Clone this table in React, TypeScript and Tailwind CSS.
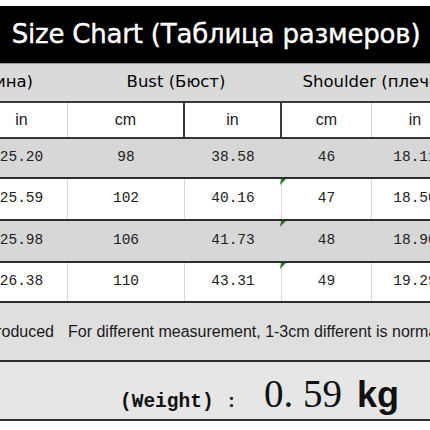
import React from "react";

const widths = ["w-[92px]", "w-[117px]", "w-[97px]", "w-[90px]", "w-[86px]"];

type Row = { values: string[]; shaded: boolean; height: string; mark?: boolean };

const rows: Row[] = [
  { values: ["25.20", "98", "38.58", "46", "18.11"], shaded: true, height: "h-[40px]" },
  { values: ["25.59", "102", "40.16", "47", "18.50"], shaded: false, height: "h-[42px]", mark: true },
  { values: ["25.98", "106", "41.73", "48", "18.90"], shaded: true, height: "h-[42px]", mark: true },
  { values: ["26.38", "110", "43.31", "49", "19.29"], shaded: false, height: "h-[40px]", mark: true },
];

const comic = { fontFamily: '"DejaVu Sans", sans-serif' };

// little green corner flag like the one left by the spreadsheet
const Mark = () => (
  <svg className="absolute left-[-2px] top-0" width="7" height="7" viewBox="0 0 7 7">
    <polygon points="1,0 6,0 0,6" fill="#2f7a2a" />
  </svg>
);

export default function App() {
  return (
    <div className="w-[430px] h-[430px] bg-white overflow-hidden">
      <div className="h-[6px]" />
      <div
        className="h-[57px] bg-black flex items-center justify-center text-white text-[26px] tracking-[-0.2px] pl-[2px] pb-[1px]"
        style={{ ...comic, WebkitTextStroke: "0.4px white" }}
      >
        Size Chart (Таблица размеров)
      </div>

      {/* group headers */}
      <div
        className="h-[40px] bg-[#dadada] border-t border-[#9a9a9a] border-b-2 border-b-[#3a3a3a] flex items-center text-[16.5px] text-[#000] whitespace-nowrap"
        style={comic}
      >
        <div className="w-[68px] overflow-hidden flex justify-end pr-[35px] shrink-0">
          <span>Length (Длина)</span>
        </div>
        <div className="w-[214px] text-center shrink-0 pl-[2px]">Bust (Бюст)</div>
        <div className="w-[176px] text-center shrink-0 pl-[8px]">Shoulder (плечо)</div>
      </div>

      {/* units */}
      <div
        className="h-[36px] bg-white border-b-2 border-[#333] flex ml-[-24px] text-[16px] text-[#222]"
        style={{ fontFamily: '"Liberation Sans", sans-serif' }}
      >
        {["in", "cm", "in", "cm", "in"].map((u, i) => (
          <div
            key={i}
            className={`${widths[i]} shrink-0 flex items-center justify-center ${
              i === 0 || i === 3
                ? "border-r border-[#d4d4d4]"
                : i === 4
                ? ""
                : "border-r-2 border-[#3a3a3a]"
            }`}
          >
            {u}
          </div>
        ))}
      </div>

      {rows.map((r, ri) => (
        <div
          key={ri}
          className={`${r.height} ${r.shaded ? "bg-[#d7d7d7]" : "bg-white"} border-b-2 border-[#2e2e2e] flex ml-[-24px] text-[14.5px] text-[#222]`}
          style={{ fontFamily: '"Liberation Mono", monospace' }}
        >
          {r.values.map((v, i) => (
            <div
              key={i}
              className={`${widths[i]} shrink-0 relative flex items-center justify-center ${
                i < 4 ? (r.shaded ? "border-r border-[#d7d7d7]" : "border-r border-[#d9d9d9]") : ""
              }`}
            >
              {r.mark && i === 3 && <Mark />}
              {v}
            </div>
          ))}
        </div>
      ))}

      {/* note */}
      <div
        className="h-[59px] bg-[#dfdfdf] border-b-2 border-[#2e2e2e] flex items-center text-[16px] text-[#1a1a1a] whitespace-nowrap"
        style={{ fontFamily: '"Liberation Sans", Arial, sans-serif' }}
      >
        <div className="w-[68px] shrink-0 overflow-hidden flex justify-end pr-[14px]">
          <span>introduced</span>
        </div>
        <span>For different measurement, 1-3cm different is normal</span>
      </div>

      {/* weight */}
      <div className="h-[59px] bg-[#e6e6e6] border-b-2 border-[#2e2e2e] flex items-baseline pl-[120px] pt-[3px] text-[#111] whitespace-nowrap">
        <span className="text-[19.5px] font-bold" style={{ fontFamily: '"Liberation Mono", monospace' }}>
          (Weight)
        </span>
        <span className="text-[19px] font-bold ml-[12px] mr-[27px]" style={{ fontFamily: '"Liberation Mono", monospace' }}>
          :
        </span>
        <span className="text-[39px]" style={{ fontFamily: '"Liberation Serif", serif' }}>
          0. 59
        </span>
        <span className="text-[36px] font-bold ml-[15px]" style={{ fontFamily: '"Liberation Sans", Arial, sans-serif' }}>
          kg
        </span>
      </div>
    </div>
  );
}
